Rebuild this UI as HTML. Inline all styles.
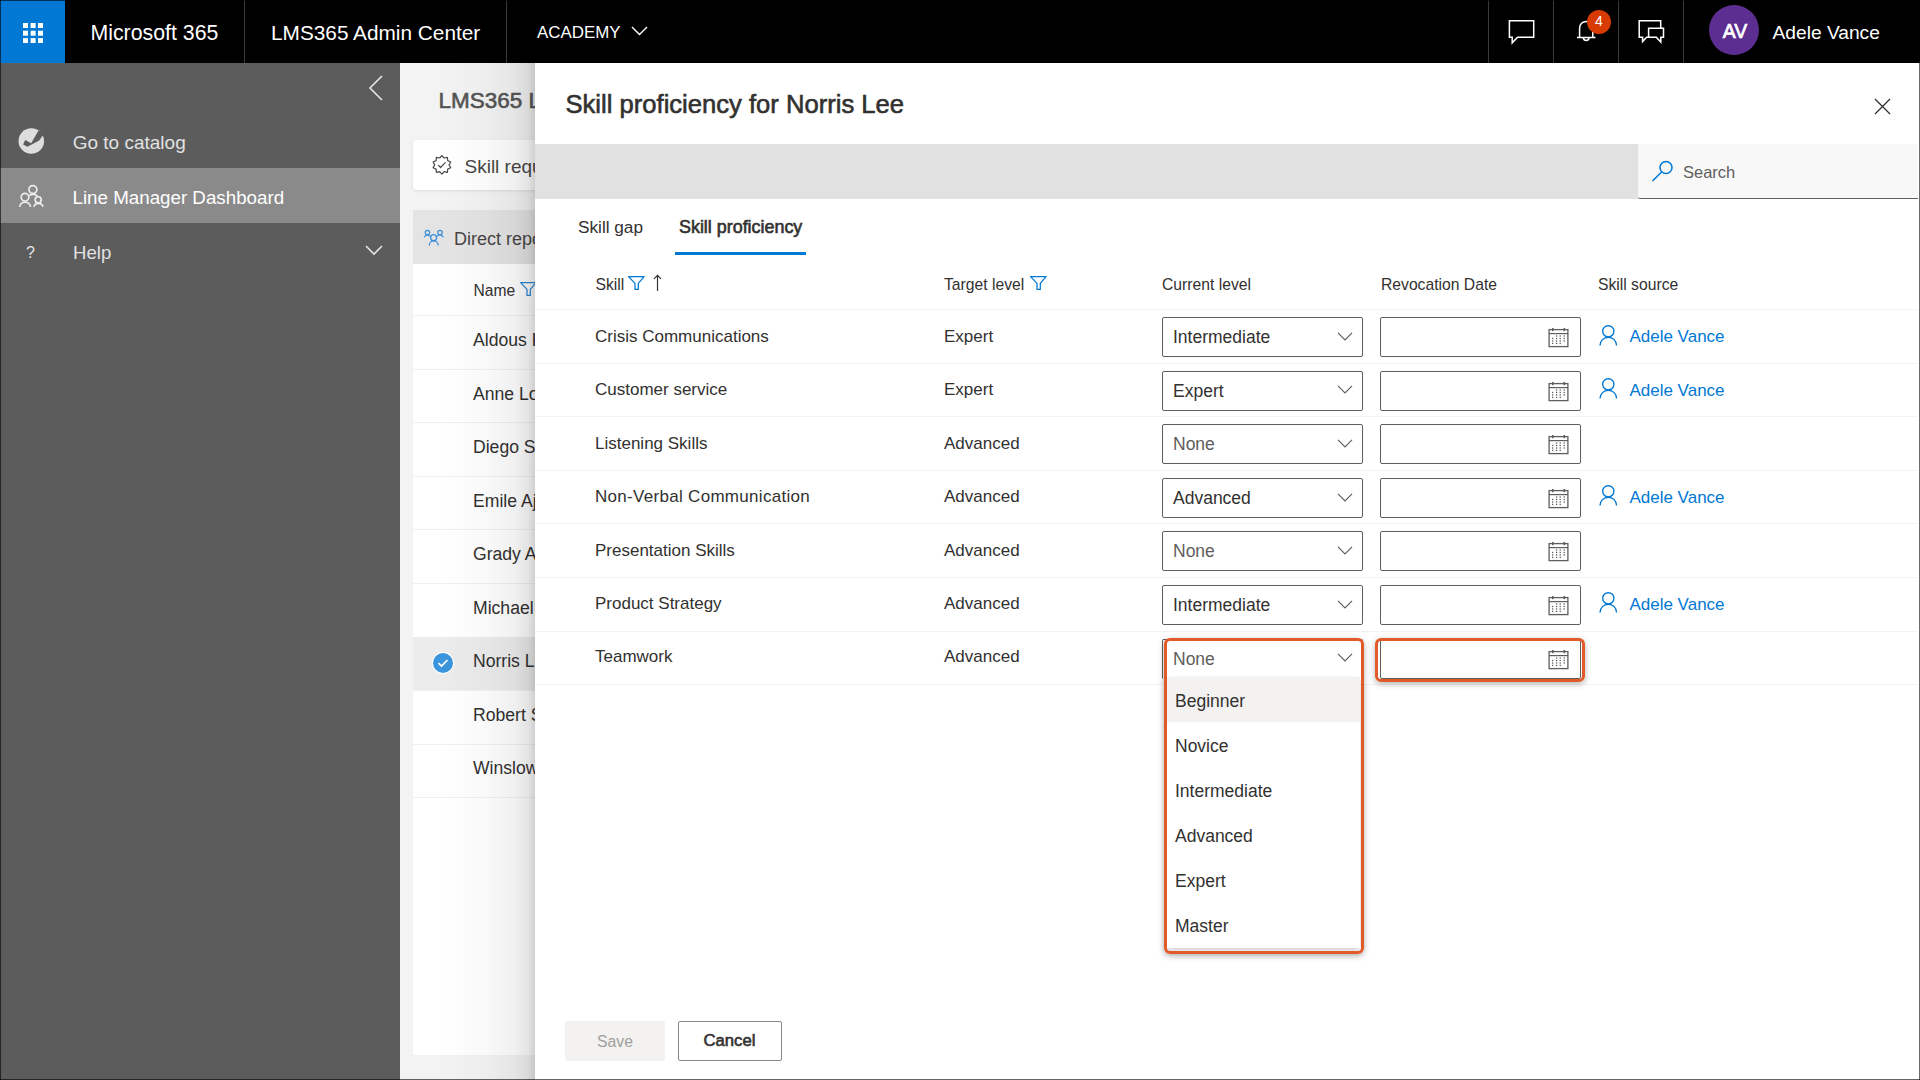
<!DOCTYPE html>
<html><head><meta charset="utf-8">
<style>
*{margin:0;padding:0;box-sizing:border-box}
html,body{width:1920px;height:1080px;overflow:hidden;background:#f3f3f3;font-family:"Liberation Sans",sans-serif;color:#323130}
.a{position:absolute}
.t{position:absolute;white-space:nowrap;line-height:1}
.sb{-webkit-text-stroke:0.6px currentColor}
#hdr{left:0;top:0;width:1920px;height:63px;background:#000}
#side{left:0;top:63px;width:400px;height:1017px;background:#5c5c5c}
#mid{left:400px;top:63px;width:135px;height:1017px;background:#f3f3f3;overflow:hidden}
#panel{left:535px;top:63px;width:1385px;height:1017px;background:#fff}
.sep{position:absolute;top:0;width:1px;height:63px;background:#3a3a3a}
.row{position:absolute;left:0;width:1383px;height:1px;background:#edebe9}
.dd{position:absolute;width:201px;height:40px;border:1px solid #605e5c;border-radius:2px;background:#fff}
.dd .v{position:absolute;left:10px;top:11px;font-size:17.5px;line-height:1;white-space:nowrap}
.dd svg{position:absolute;right:8.6px;top:13.8px}
.df{position:absolute;width:201px;height:40px;border:1px solid #605e5c;border-radius:2px;background:#fff}
.df svg{position:absolute;left:167px;top:10px}
.src{position:absolute;color:#0078d4;font-size:17px;white-space:nowrap;line-height:1}
.src svg{position:absolute;left:-30px;top:-5.5px}
.cell{position:absolute;font-size:17px;white-space:nowrap;line-height:1}
.mrow{position:absolute;left:0;width:135px;height:1px;background:#f1f1f1}
.mname{position:absolute;left:73px;font-size:17.6px;white-space:nowrap;line-height:1;color:#323130}
.li{position:absolute;left:0;width:194px;height:45px}
.li span{position:absolute;left:9px;top:14px;font-size:17.5px;line-height:1;white-space:nowrap}

.hr{left:535px;width:1383px;height:1px;background:#f3f3f3}
.hd{top:276.6px;font-size:15.7px;color:#323130}
.cell{font-size:17px;color:#323130}
.li{left:1175px;font-size:17.5px;color:#323130}
</style></head>
<body>
<!-- HEADER -->
<div id="hdr" class="a">
  <div class="a" style="left:0;top:0;width:65px;height:63px;background:#0078d4"></div>
  <svg class="a" style="left:23px;top:23px" width="20" height="20" viewBox="0 0 20 20" fill="#fff"><rect x="0" y="0" width="5" height="5"/><rect x="7.6" y="0" width="5" height="5"/><rect x="15" y="0" width="5" height="5"/><rect x="0" y="7.7" width="5" height="5"/><rect x="7.6" y="7.7" width="5" height="5"/><rect x="15" y="7.7" width="5" height="5"/><rect x="0" y="15.1" width="5" height="5"/><rect x="7.6" y="15.1" width="5" height="5"/><rect x="15" y="15.1" width="5" height="5"/></svg>
  <div class="t" style="left:90.5px;top:22.8px;font-size:21.3px;color:#fff">Microsoft 365</div>
  <div class="sep" style="left:244px"></div>
  <div class="t" style="left:271px;top:22.8px;font-size:20.8px;color:#fff">LMS365 Admin Center</div>
  <div class="sep" style="left:506px"></div>
  <div class="t" style="left:537px;top:24.5px;font-size:16.9px;color:#fff">ACADEMY</div>
  <svg class="a" style="left:631px;top:26px" width="17" height="10" viewBox="0 0 17 10"><path d="M1 1 L8.5 8.5 L16 1" fill="none" stroke="#fff" stroke-width="1.4"/></svg>
  <div class="sep" style="left:1488px"></div>
  <div class="sep" style="left:1553px"></div>
  <div class="sep" style="left:1618px"></div>
  <div class="sep" style="left:1683px"></div>
  <!-- chat -->
  <svg class="a" style="left:1507px;top:19px" width="30" height="27" viewBox="0 0 30 27"><path d="M2.4 1.8 H26.7 V18.2 H10.6 L5.2 23.8 V18.2 H2.4 Z" fill="none" stroke="#fff" stroke-width="1.5"/></svg>
  <!-- bell -->
  <svg class="a" style="left:1572px;top:16px" width="28" height="28" viewBox="0 0 28 28"><path d="M5 21.6 H23.5 M7.6 21.6 V12 A6.6 6.6 0 0 1 20.8 12 V21.6 M11.3 21.6 A2.9 2.9 0 0 0 17.1 21.6" fill="none" stroke="#fff" stroke-width="1.5"/></svg>
  <div class="a" style="left:1587px;top:10px;width:24px;height:24px;border-radius:50%;background:#d83b01"></div>
  <div class="t" style="left:1593px;top:14px;font-size:14px;color:#fff;width:12px;text-align:center">4</div>
  <!-- feedback -->
  <svg class="a" style="left:1637px;top:19px" width="30" height="27" viewBox="0 0 30 27" fill="none" stroke="#fff" stroke-width="1.5"><path d="M11.6 18.2 H9.6 L5.6 22.6 V18.2 H2.2 V1.8 H23.7 V9.3"/><path d="M11.6 9.3 H26.5 V18.2 H23.8 V23 L19.3 18.2 H11.6 Z"/></svg>
  <div class="a" style="left:1709px;top:5px;width:50px;height:50px;border-radius:50%;background:#5c2e91"></div>
  <div class="t" style="left:1710px;top:22.3px;width:50px;text-align:center;font-size:19.4px;color:#fff;-webkit-text-stroke:0.7px #fff">AV</div>
  <div class="t" style="left:1772.5px;top:22.5px;font-size:19.2px;color:#fff">Adele Vance</div>
</div>

<!-- SIDEBAR -->
<div id="side" class="a">
  <svg class="a" style="left:368px;top:12px" width="16" height="26" viewBox="0 0 16 26"><path d="M14 1 L2 13 L14 25" fill="none" stroke="#e6e6e6" stroke-width="1.6"/></svg>
  <svg class="a" style="left:14px;top:61px" width="34" height="34" viewBox="0 0 34 34"><circle cx="17.3" cy="17" r="12.8" fill="#dedede"/><path d="M9.1 20.5 L11.2 16.1 L17.2 19.2 L24.6 6.3 L29.5 10.5 L25.2 16.6 L13.5 22.7 Z" fill="#5c5c5c"/></svg>
  <div class="t" style="left:72.7px;top:70px;font-size:19px;color:#e1e1e1">Go to catalog</div>
  <div class="a" style="left:0;top:105px;width:400px;height:55px;background:#8a8a8a"></div>
  <svg class="a" style="left:14px;top:117px" width="34" height="34" viewBox="0 0 34 34" fill="none" stroke="#ececec" stroke-width="1.7"><circle cx="18.9" cy="9.5" r="3.95"/><circle cx="11" cy="17.3" r="3.85"/><circle cx="24.2" cy="19.8" r="3.05"/><path d="M5.6 26.8 A5.6 5.6 0 0 1 16.6 26.8"/><path d="M19.9 26.8 A4.7 4.7 0 0 1 29 26.8"/><path d="M15.3 15.6 A6 6 0 0 1 23.6 16.6"/></svg>
  <div class="t" style="left:72.5px;top:126px;font-size:18.75px;color:#fff">Line Manager Dashboard</div>
  <div class="t" style="left:26px;top:181.5px;font-size:16px;color:#e6e6e6">?</div>
  <div class="t" style="left:73px;top:181.2px;font-size:18.6px;color:#e1e1e1">Help</div>
  <svg class="a" style="left:365px;top:182px" width="18" height="11" viewBox="0 0 18 11"><path d="M1 1 L9 9 L17 1" fill="none" stroke="#e6e6e6" stroke-width="1.6"/></svg>
</div>

<!-- MIDDLE (background page) -->
<div id="mid" class="a">
  <div class="t sb" style="left:38.5px;top:26.5px;font-size:22.5px;color:#555">LMS365 Line Manager Dashboard</div>
  <div class="a" style="left:13px;top:77px;width:300px;height:50px;background:#fff;border-radius:4px;box-shadow:0 1px 3px rgba(0,0,0,0.1)"></div>
  <svg class="a" style="left:31px;top:92px" width="22" height="22" viewBox="0 0 22 22" fill="none" stroke="#4a4a4a" stroke-width="1.2" stroke-linejoin="round"><polygon points="10.90,0.55 13.12,3.00 16.37,2.33 16.72,5.62 19.74,6.98 18.10,9.85 19.74,12.72 16.72,14.08 16.37,17.37 13.12,16.70 10.90,19.15 8.68,16.70 5.43,17.37 5.08,14.08 2.06,12.72 3.70,9.85 2.06,6.98 5.08,5.62 5.43,2.33 8.68,3.00"/><path d="M7.3 10.2 L9.6 12.5 L14.5 7.3"/></svg>
  <div class="t" style="left:64.5px;top:94px;font-size:19px;color:#484644">Skill requirements</div>
  <div class="a" style="left:13px;top:147px;width:300px;height:54px;background:#e4e4e4"></div>
  <svg class="a" style="left:21px;top:165px" width="26" height="22" viewBox="0 0 26 22" fill="none" stroke="#3a8fd9" stroke-width="1.25"><circle cx="6.45" cy="4.55" r="2.2"/><circle cx="19" cy="4.55" r="2.2"/><circle cx="12.6" cy="9.7" r="3"/><path d="M8.3 17.4 A4.45 4.45 0 0 1 17.2 17.4"/><path d="M3.1 9.4 A3.6 3.6 0 0 1 9.2 8.3"/><path d="M16 8.3 A3.6 3.6 0 0 1 22.3 9.4"/></svg>
  <div class="t" style="left:54px;top:167.3px;font-size:18px;color:#484644">Direct reports</div>
  <div class="a" style="left:13px;top:201px;width:300px;height:791px;background:#fff"></div>
  <div class="t" style="left:73.5px;top:219.5px;font-size:15.6px;color:#323130">Name</div>
  <svg class="a" style="left:120px;top:218px" width="18" height="16" viewBox="0 0 18 16"><path d="M0.6 1.6 H16.1 L10.3 8.4 V14.4 H7 V8.4 Z" fill="none" stroke="#2b88d8" stroke-width="1.25" stroke-linejoin="round"/></svg>
  <div class="mrow" style="left:13px;top:252px"></div>
  <div class="mname" style="top:269.1px">Aldous Huxley</div>
  <div class="mrow" style="left:13px;top:306px"></div>
  <div class="mname" style="top:323.1px">Anne Lopez</div>
  <div class="mrow" style="left:13px;top:359px"></div>
  <div class="mname" style="top:376.1px">Diego Siciliani</div>
  <div class="mrow" style="left:13px;top:413px"></div>
  <div class="mname" style="top:430.1px">Emile Ajar</div>
  <div class="mrow" style="left:13px;top:466px"></div>
  <div class="mname" style="top:483.1px">Grady Archie</div>
  <div class="mrow" style="left:13px;top:520px"></div>
  <div class="mname" style="top:537.1px">Michael Scott</div>
  <div class="mrow" style="left:13px;top:574px"></div>
  <div class="a" style="left:13px;top:574px;width:300px;height:54px;background:#ececec"></div>
  <div class="a" style="left:32px;top:589px;width:22px;height:22px;border-radius:50%;background:#fff"></div>
  <svg class="a" style="left:33px;top:590px" width="20" height="20" viewBox="0 0 20 20"><circle cx="10" cy="10" r="10" fill="#3b95dc"/><path d="M5.5 10.2 L8.5 13 L14.5 7" fill="none" stroke="#fff" stroke-width="1.7"/></svg>
  <div class="mname" style="top:590.1px">Norris Lee</div>
  <div class="mrow" style="left:13px;top:627px"></div>
  <div class="mname" style="top:644.1px">Robert Smith</div>
  <div class="mrow" style="left:13px;top:681px"></div>
  <div class="mname" style="top:697.1px">Winslow Homer</div>
  <div class="mrow" style="left:13px;top:734px"></div>
  <!-- panel shadow -->
  <div class="a" style="left:0;top:0;width:135px;height:1017px;background:linear-gradient(to right,rgba(0,0,0,0) 0px,rgba(0,0,0,0) 40px,rgba(0,0,0,0.025) 85px,rgba(0,0,0,0.06) 115px,rgba(0,0,0,0.11) 128px,rgba(0,0,0,0.19) 135px)"></div>
</div>

<!-- PANEL -->
<div id="panel" class="a"></div>
<div class="t sb" style="left:565.5px;top:91.7px;font-size:25.6px;color:#323130">Skill proficiency for Norris Lee</div>
<svg class="a" style="left:1874px;top:98px" width="17" height="17" viewBox="0 0 17 17"><path d="M1 1 L16 16 M16 1 L1 16" stroke="#323130" stroke-width="1.3" fill="none"/></svg>
<div class="a" style="left:535px;top:144px;width:1103px;height:55px;background:#e1e1e1"></div>
<div class="a" style="left:1638px;top:144px;width:280px;height:55px;background:#f8f8f8;border-bottom:1px solid #605e5c;border-bottom-left-radius:2px"></div>
<svg class="a" style="left:1651px;top:160px" width="23" height="22" viewBox="0 0 23 22" fill="none" stroke="#0078d4" stroke-width="1.5"><circle cx="15" cy="7.5" r="6"/><path d="M10.8 11.8 L1.5 21"/></svg>
<div class="t" style="left:1683px;top:163.5px;font-size:16.5px;color:#605e5c">Search</div>
<div class="t" style="left:578px;top:219.2px;font-size:17.2px;color:#323130">Skill gap</div>
<div class="t sb" style="left:679px;top:218.6px;font-size:17.9px;color:#323130">Skill proficiency</div>
<div class="a" style="left:675px;top:252px;width:131px;height:2.5px;background:#0078d4"></div>
<div class="t hd" style="left:595.5px">Skill</div>
<svg class="a" style="left:628px;top:275px" width="18" height="16" viewBox="0 0 18 16"><path d="M0.6 1.6 H16.1 L10.3 8.4 V14.4 H7 V8.4 Z" fill="none" stroke="#0078d4" stroke-width="1.25" stroke-linejoin="round"/></svg>
<svg class="a" style="left:652px;top:274px" width="11" height="18" viewBox="0 0 11 18"><path d="M5.5 1.3 V17 M2 4.9 L5.5 1.3 L9 4.9" fill="none" stroke="#323130" stroke-width="1.15"/></svg>
<div class="t hd" style="left:944px">Target level</div>
<svg class="a" style="left:1029.5px;top:275px" width="18" height="16" viewBox="0 0 18 16"><path d="M0.6 1.6 H16.1 L10.3 8.4 V14.4 H7 V8.4 Z" fill="none" stroke="#0078d4" stroke-width="1.25" stroke-linejoin="round"/></svg>
<div class="t hd" style="left:1162px">Current level</div>
<div class="t hd" style="left:1381px">Revocation Date</div>
<div class="t hd" style="left:1598px">Skill source</div>

<div class="a hr" style="top:309.0px"></div>
<div class="t cell" style="left:595px;top:327.8px">Crisis Communications</div>
<div class="t cell" style="left:944px;top:327.8px">Expert</div>
<div class="dd" style="left:1162px;top:317.0px"><span class="v" style="color:#323130">Intermediate</span><svg width="16" height="9" viewBox="0 0 16 9"><path d="M1 0.8 L8 7.8 L15 0.8" fill="none" stroke="#605e5c" stroke-width="1.2"/></svg></div>
<div class="df" style="left:1380px;top:317.0px"><svg width="22" height="20" viewBox="0 0 22 20" fill="#605e5c"><rect x="1.1" y="1.6" width="18.8" height="17" fill="none" stroke="#605e5c" stroke-width="1.3"/><rect x="1" y="5" width="19" height="1.2"/><rect x="4" y="0" width="1.6" height="3.2"/><rect x="15.5" y="0" width="1.6" height="3.2"/><rect x="7.949999999999999" y="7.35" width="1.3" height="1.3"/><rect x="11.549999999999999" y="7.35" width="1.3" height="1.3"/><rect x="15.549999999999999" y="7.35" width="1.3" height="1.3"/><rect x="3.9499999999999997" y="9.85" width="1.3" height="1.3"/><rect x="7.949999999999999" y="9.85" width="1.3" height="1.3"/><rect x="11.549999999999999" y="9.85" width="1.3" height="1.3"/><rect x="15.549999999999999" y="9.85" width="1.3" height="1.3"/><rect x="3.9499999999999997" y="12.35" width="1.3" height="1.3"/><rect x="7.949999999999999" y="12.35" width="1.3" height="1.3"/><rect x="11.549999999999999" y="12.35" width="1.3" height="1.3"/><rect x="15.549999999999999" y="12.35" width="1.3" height="1.3"/><rect x="3.9499999999999997" y="14.75" width="1.3" height="1.3"/><rect x="7.949999999999999" y="14.75" width="1.3" height="1.3"/><rect x="11.549999999999999" y="14.75" width="1.3" height="1.3"/></svg></div>
<div class="src" style="left:1629.4px;top:328.4px"><svg width="20" height="24" viewBox="0 0 20 24" fill="none" stroke="#0078d4" stroke-width="1.35"><circle cx="9.3" cy="8.3" r="5.6"/><path d="M1 22.5 A8.3 8.3 0 0 1 17.6 22.5"/></svg>Adele Vance</div>
<div class="a hr" style="top:362.6px"></div>
<div class="t cell" style="left:595px;top:381.2px">Customer service</div>
<div class="t cell" style="left:944px;top:381.2px">Expert</div>
<div class="dd" style="left:1162px;top:370.6px"><span class="v" style="color:#323130">Expert</span><svg width="16" height="9" viewBox="0 0 16 9"><path d="M1 0.8 L8 7.8 L15 0.8" fill="none" stroke="#605e5c" stroke-width="1.2"/></svg></div>
<div class="df" style="left:1380px;top:370.6px"><svg width="22" height="20" viewBox="0 0 22 20" fill="#605e5c"><rect x="1.1" y="1.6" width="18.8" height="17" fill="none" stroke="#605e5c" stroke-width="1.3"/><rect x="1" y="5" width="19" height="1.2"/><rect x="4" y="0" width="1.6" height="3.2"/><rect x="15.5" y="0" width="1.6" height="3.2"/><rect x="7.949999999999999" y="7.35" width="1.3" height="1.3"/><rect x="11.549999999999999" y="7.35" width="1.3" height="1.3"/><rect x="15.549999999999999" y="7.35" width="1.3" height="1.3"/><rect x="3.9499999999999997" y="9.85" width="1.3" height="1.3"/><rect x="7.949999999999999" y="9.85" width="1.3" height="1.3"/><rect x="11.549999999999999" y="9.85" width="1.3" height="1.3"/><rect x="15.549999999999999" y="9.85" width="1.3" height="1.3"/><rect x="3.9499999999999997" y="12.35" width="1.3" height="1.3"/><rect x="7.949999999999999" y="12.35" width="1.3" height="1.3"/><rect x="11.549999999999999" y="12.35" width="1.3" height="1.3"/><rect x="15.549999999999999" y="12.35" width="1.3" height="1.3"/><rect x="3.9499999999999997" y="14.75" width="1.3" height="1.3"/><rect x="7.949999999999999" y="14.75" width="1.3" height="1.3"/><rect x="11.549999999999999" y="14.75" width="1.3" height="1.3"/></svg></div>
<div class="src" style="left:1629.4px;top:381.8px"><svg width="20" height="24" viewBox="0 0 20 24" fill="none" stroke="#0078d4" stroke-width="1.35"><circle cx="9.3" cy="8.3" r="5.6"/><path d="M1 22.5 A8.3 8.3 0 0 1 17.6 22.5"/></svg>Adele Vance</div>
<div class="a hr" style="top:416.2px"></div>
<div class="t cell" style="left:595px;top:434.6px">Listening Skills</div>
<div class="t cell" style="left:944px;top:434.6px">Advanced</div>
<div class="dd" style="left:1162px;top:424.2px"><span class="v" style="color:#605e5c">None</span><svg width="16" height="9" viewBox="0 0 16 9"><path d="M1 0.8 L8 7.8 L15 0.8" fill="none" stroke="#605e5c" stroke-width="1.2"/></svg></div>
<div class="df" style="left:1380px;top:424.2px"><svg width="22" height="20" viewBox="0 0 22 20" fill="#605e5c"><rect x="1.1" y="1.6" width="18.8" height="17" fill="none" stroke="#605e5c" stroke-width="1.3"/><rect x="1" y="5" width="19" height="1.2"/><rect x="4" y="0" width="1.6" height="3.2"/><rect x="15.5" y="0" width="1.6" height="3.2"/><rect x="7.949999999999999" y="7.35" width="1.3" height="1.3"/><rect x="11.549999999999999" y="7.35" width="1.3" height="1.3"/><rect x="15.549999999999999" y="7.35" width="1.3" height="1.3"/><rect x="3.9499999999999997" y="9.85" width="1.3" height="1.3"/><rect x="7.949999999999999" y="9.85" width="1.3" height="1.3"/><rect x="11.549999999999999" y="9.85" width="1.3" height="1.3"/><rect x="15.549999999999999" y="9.85" width="1.3" height="1.3"/><rect x="3.9499999999999997" y="12.35" width="1.3" height="1.3"/><rect x="7.949999999999999" y="12.35" width="1.3" height="1.3"/><rect x="11.549999999999999" y="12.35" width="1.3" height="1.3"/><rect x="15.549999999999999" y="12.35" width="1.3" height="1.3"/><rect x="3.9499999999999997" y="14.75" width="1.3" height="1.3"/><rect x="7.949999999999999" y="14.75" width="1.3" height="1.3"/><rect x="11.549999999999999" y="14.75" width="1.3" height="1.3"/></svg></div>
<div class="a hr" style="top:469.8px"></div>
<div class="t cell" style="left:595px;top:488.1px;letter-spacing:0.3px">Non-Verbal Communication</div>
<div class="t cell" style="left:944px;top:488.1px">Advanced</div>
<div class="dd" style="left:1162px;top:477.8px"><span class="v" style="color:#323130">Advanced</span><svg width="16" height="9" viewBox="0 0 16 9"><path d="M1 0.8 L8 7.8 L15 0.8" fill="none" stroke="#605e5c" stroke-width="1.2"/></svg></div>
<div class="df" style="left:1380px;top:477.8px"><svg width="22" height="20" viewBox="0 0 22 20" fill="#605e5c"><rect x="1.1" y="1.6" width="18.8" height="17" fill="none" stroke="#605e5c" stroke-width="1.3"/><rect x="1" y="5" width="19" height="1.2"/><rect x="4" y="0" width="1.6" height="3.2"/><rect x="15.5" y="0" width="1.6" height="3.2"/><rect x="7.949999999999999" y="7.35" width="1.3" height="1.3"/><rect x="11.549999999999999" y="7.35" width="1.3" height="1.3"/><rect x="15.549999999999999" y="7.35" width="1.3" height="1.3"/><rect x="3.9499999999999997" y="9.85" width="1.3" height="1.3"/><rect x="7.949999999999999" y="9.85" width="1.3" height="1.3"/><rect x="11.549999999999999" y="9.85" width="1.3" height="1.3"/><rect x="15.549999999999999" y="9.85" width="1.3" height="1.3"/><rect x="3.9499999999999997" y="12.35" width="1.3" height="1.3"/><rect x="7.949999999999999" y="12.35" width="1.3" height="1.3"/><rect x="11.549999999999999" y="12.35" width="1.3" height="1.3"/><rect x="15.549999999999999" y="12.35" width="1.3" height="1.3"/><rect x="3.9499999999999997" y="14.75" width="1.3" height="1.3"/><rect x="7.949999999999999" y="14.75" width="1.3" height="1.3"/><rect x="11.549999999999999" y="14.75" width="1.3" height="1.3"/></svg></div>
<div class="src" style="left:1629.4px;top:488.7px"><svg width="20" height="24" viewBox="0 0 20 24" fill="none" stroke="#0078d4" stroke-width="1.35"><circle cx="9.3" cy="8.3" r="5.6"/><path d="M1 22.5 A8.3 8.3 0 0 1 17.6 22.5"/></svg>Adele Vance</div>
<div class="a hr" style="top:523.4px"></div>
<div class="t cell" style="left:595px;top:541.5px">Presentation Skills</div>
<div class="t cell" style="left:944px;top:541.5px">Advanced</div>
<div class="dd" style="left:1162px;top:531.4px"><span class="v" style="color:#605e5c">None</span><svg width="16" height="9" viewBox="0 0 16 9"><path d="M1 0.8 L8 7.8 L15 0.8" fill="none" stroke="#605e5c" stroke-width="1.2"/></svg></div>
<div class="df" style="left:1380px;top:531.4px"><svg width="22" height="20" viewBox="0 0 22 20" fill="#605e5c"><rect x="1.1" y="1.6" width="18.8" height="17" fill="none" stroke="#605e5c" stroke-width="1.3"/><rect x="1" y="5" width="19" height="1.2"/><rect x="4" y="0" width="1.6" height="3.2"/><rect x="15.5" y="0" width="1.6" height="3.2"/><rect x="7.949999999999999" y="7.35" width="1.3" height="1.3"/><rect x="11.549999999999999" y="7.35" width="1.3" height="1.3"/><rect x="15.549999999999999" y="7.35" width="1.3" height="1.3"/><rect x="3.9499999999999997" y="9.85" width="1.3" height="1.3"/><rect x="7.949999999999999" y="9.85" width="1.3" height="1.3"/><rect x="11.549999999999999" y="9.85" width="1.3" height="1.3"/><rect x="15.549999999999999" y="9.85" width="1.3" height="1.3"/><rect x="3.9499999999999997" y="12.35" width="1.3" height="1.3"/><rect x="7.949999999999999" y="12.35" width="1.3" height="1.3"/><rect x="11.549999999999999" y="12.35" width="1.3" height="1.3"/><rect x="15.549999999999999" y="12.35" width="1.3" height="1.3"/><rect x="3.9499999999999997" y="14.75" width="1.3" height="1.3"/><rect x="7.949999999999999" y="14.75" width="1.3" height="1.3"/><rect x="11.549999999999999" y="14.75" width="1.3" height="1.3"/></svg></div>
<div class="a hr" style="top:577.0px"></div>
<div class="t cell" style="left:595px;top:594.9px">Product Strategy</div>
<div class="t cell" style="left:944px;top:594.9px">Advanced</div>
<div class="dd" style="left:1162px;top:585.0px"><span class="v" style="color:#323130">Intermediate</span><svg width="16" height="9" viewBox="0 0 16 9"><path d="M1 0.8 L8 7.8 L15 0.8" fill="none" stroke="#605e5c" stroke-width="1.2"/></svg></div>
<div class="df" style="left:1380px;top:585.0px"><svg width="22" height="20" viewBox="0 0 22 20" fill="#605e5c"><rect x="1.1" y="1.6" width="18.8" height="17" fill="none" stroke="#605e5c" stroke-width="1.3"/><rect x="1" y="5" width="19" height="1.2"/><rect x="4" y="0" width="1.6" height="3.2"/><rect x="15.5" y="0" width="1.6" height="3.2"/><rect x="7.949999999999999" y="7.35" width="1.3" height="1.3"/><rect x="11.549999999999999" y="7.35" width="1.3" height="1.3"/><rect x="15.549999999999999" y="7.35" width="1.3" height="1.3"/><rect x="3.9499999999999997" y="9.85" width="1.3" height="1.3"/><rect x="7.949999999999999" y="9.85" width="1.3" height="1.3"/><rect x="11.549999999999999" y="9.85" width="1.3" height="1.3"/><rect x="15.549999999999999" y="9.85" width="1.3" height="1.3"/><rect x="3.9499999999999997" y="12.35" width="1.3" height="1.3"/><rect x="7.949999999999999" y="12.35" width="1.3" height="1.3"/><rect x="11.549999999999999" y="12.35" width="1.3" height="1.3"/><rect x="15.549999999999999" y="12.35" width="1.3" height="1.3"/><rect x="3.9499999999999997" y="14.75" width="1.3" height="1.3"/><rect x="7.949999999999999" y="14.75" width="1.3" height="1.3"/><rect x="11.549999999999999" y="14.75" width="1.3" height="1.3"/></svg></div>
<div class="src" style="left:1629.4px;top:595.5px"><svg width="20" height="24" viewBox="0 0 20 24" fill="none" stroke="#0078d4" stroke-width="1.35"><circle cx="9.3" cy="8.3" r="5.6"/><path d="M1 22.5 A8.3 8.3 0 0 1 17.6 22.5"/></svg>Adele Vance</div>
<div class="a hr" style="top:630.6px"></div>
<div class="t cell" style="left:595px;top:648.3px">Teamwork</div>
<div class="t cell" style="left:944px;top:648.3px">Advanced</div>
<div class="dd" style="left:1162px;top:638.6px;border-bottom-color:transparent;border-bottom-left-radius:0;border-bottom-right-radius:0"><span class="v" style="color:#605e5c">None</span><svg width="16" height="9" viewBox="0 0 16 9"><path d="M1 0.8 L8 7.8 L15 0.8" fill="none" stroke="#605e5c" stroke-width="1.2"/></svg></div>
<div class="df" style="left:1380px;top:638.6px"><svg width="22" height="20" viewBox="0 0 22 20" fill="#605e5c"><rect x="1.1" y="1.6" width="18.8" height="17" fill="none" stroke="#605e5c" stroke-width="1.3"/><rect x="1" y="5" width="19" height="1.2"/><rect x="4" y="0" width="1.6" height="3.2"/><rect x="15.5" y="0" width="1.6" height="3.2"/><rect x="7.949999999999999" y="7.35" width="1.3" height="1.3"/><rect x="11.549999999999999" y="7.35" width="1.3" height="1.3"/><rect x="15.549999999999999" y="7.35" width="1.3" height="1.3"/><rect x="3.9499999999999997" y="9.85" width="1.3" height="1.3"/><rect x="7.949999999999999" y="9.85" width="1.3" height="1.3"/><rect x="11.549999999999999" y="9.85" width="1.3" height="1.3"/><rect x="15.549999999999999" y="9.85" width="1.3" height="1.3"/><rect x="3.9499999999999997" y="12.35" width="1.3" height="1.3"/><rect x="7.949999999999999" y="12.35" width="1.3" height="1.3"/><rect x="11.549999999999999" y="12.35" width="1.3" height="1.3"/><rect x="15.549999999999999" y="12.35" width="1.3" height="1.3"/><rect x="3.9499999999999997" y="14.75" width="1.3" height="1.3"/><rect x="7.949999999999999" y="14.75" width="1.3" height="1.3"/><rect x="11.549999999999999" y="14.75" width="1.3" height="1.3"/></svg></div>
<div class="a hr" style="top:684.2px"></div>
<!-- annotation + dropdown list -->
<div class="a" style="left:1166px;top:677px;width:194px;height:271px;background:#fff;box-shadow:0 3px 6px rgba(0,0,0,0.18)"></div>
<div class="a" style="left:1166px;top:677px;width:194px;height:45px;background:#f3f2f1"></div>
<div class="t li" style="top:692.8px">Beginner</div>
<div class="t li" style="top:737.8px">Novice</div>
<div class="t li" style="top:782.8px">Intermediate</div>
<div class="t li" style="top:827.8px">Advanced</div>
<div class="t li" style="top:872.8px">Expert</div>
<div class="t li" style="top:917.8px">Master</div>
<div class="a" style="left:1164px;top:638px;width:200px;height:316px;border:3px solid #e05a2a;border-radius:6px;box-shadow:0 2px 6px rgba(0,0,0,0.3)"></div>
<div class="a" style="left:1375px;top:638px;width:210px;height:44px;border:3px solid #e05a2a;border-radius:6px;box-shadow:0 2px 6px rgba(0,0,0,0.3)"></div>
<!-- buttons -->
<div class="a" style="left:565px;top:1021px;width:100px;height:40px;background:#f3f2f1;border-radius:2px"></div>
<div class="t" style="left:597px;top:1034px;font-size:15.8px;color:#a19f9d">Save</div>
<div class="a" style="left:678px;top:1021px;width:104px;height:40px;background:#fff;border:1px solid #8a8886;border-radius:2px"></div>
<div class="t sb" style="left:703.5px;top:1033.4px;font-size:16.7px;color:#323130">Cancel</div>


<!-- outer frame -->
<div class="a" style="left:0;top:0;width:1920px;height:1px;background:rgba(0,0,0,0.6)"></div>
<div class="a" style="left:0;top:0;width:1px;height:1080px;background:rgba(0,0,0,0.6)"></div>
<div class="a" style="left:0;top:1079px;width:1920px;height:1px;background:rgba(0,0,0,0.6)"></div>
<div class="a" style="left:1919px;top:0;width:1px;height:1080px;background:rgba(0,0,0,0.58)"></div>
</body></html>
